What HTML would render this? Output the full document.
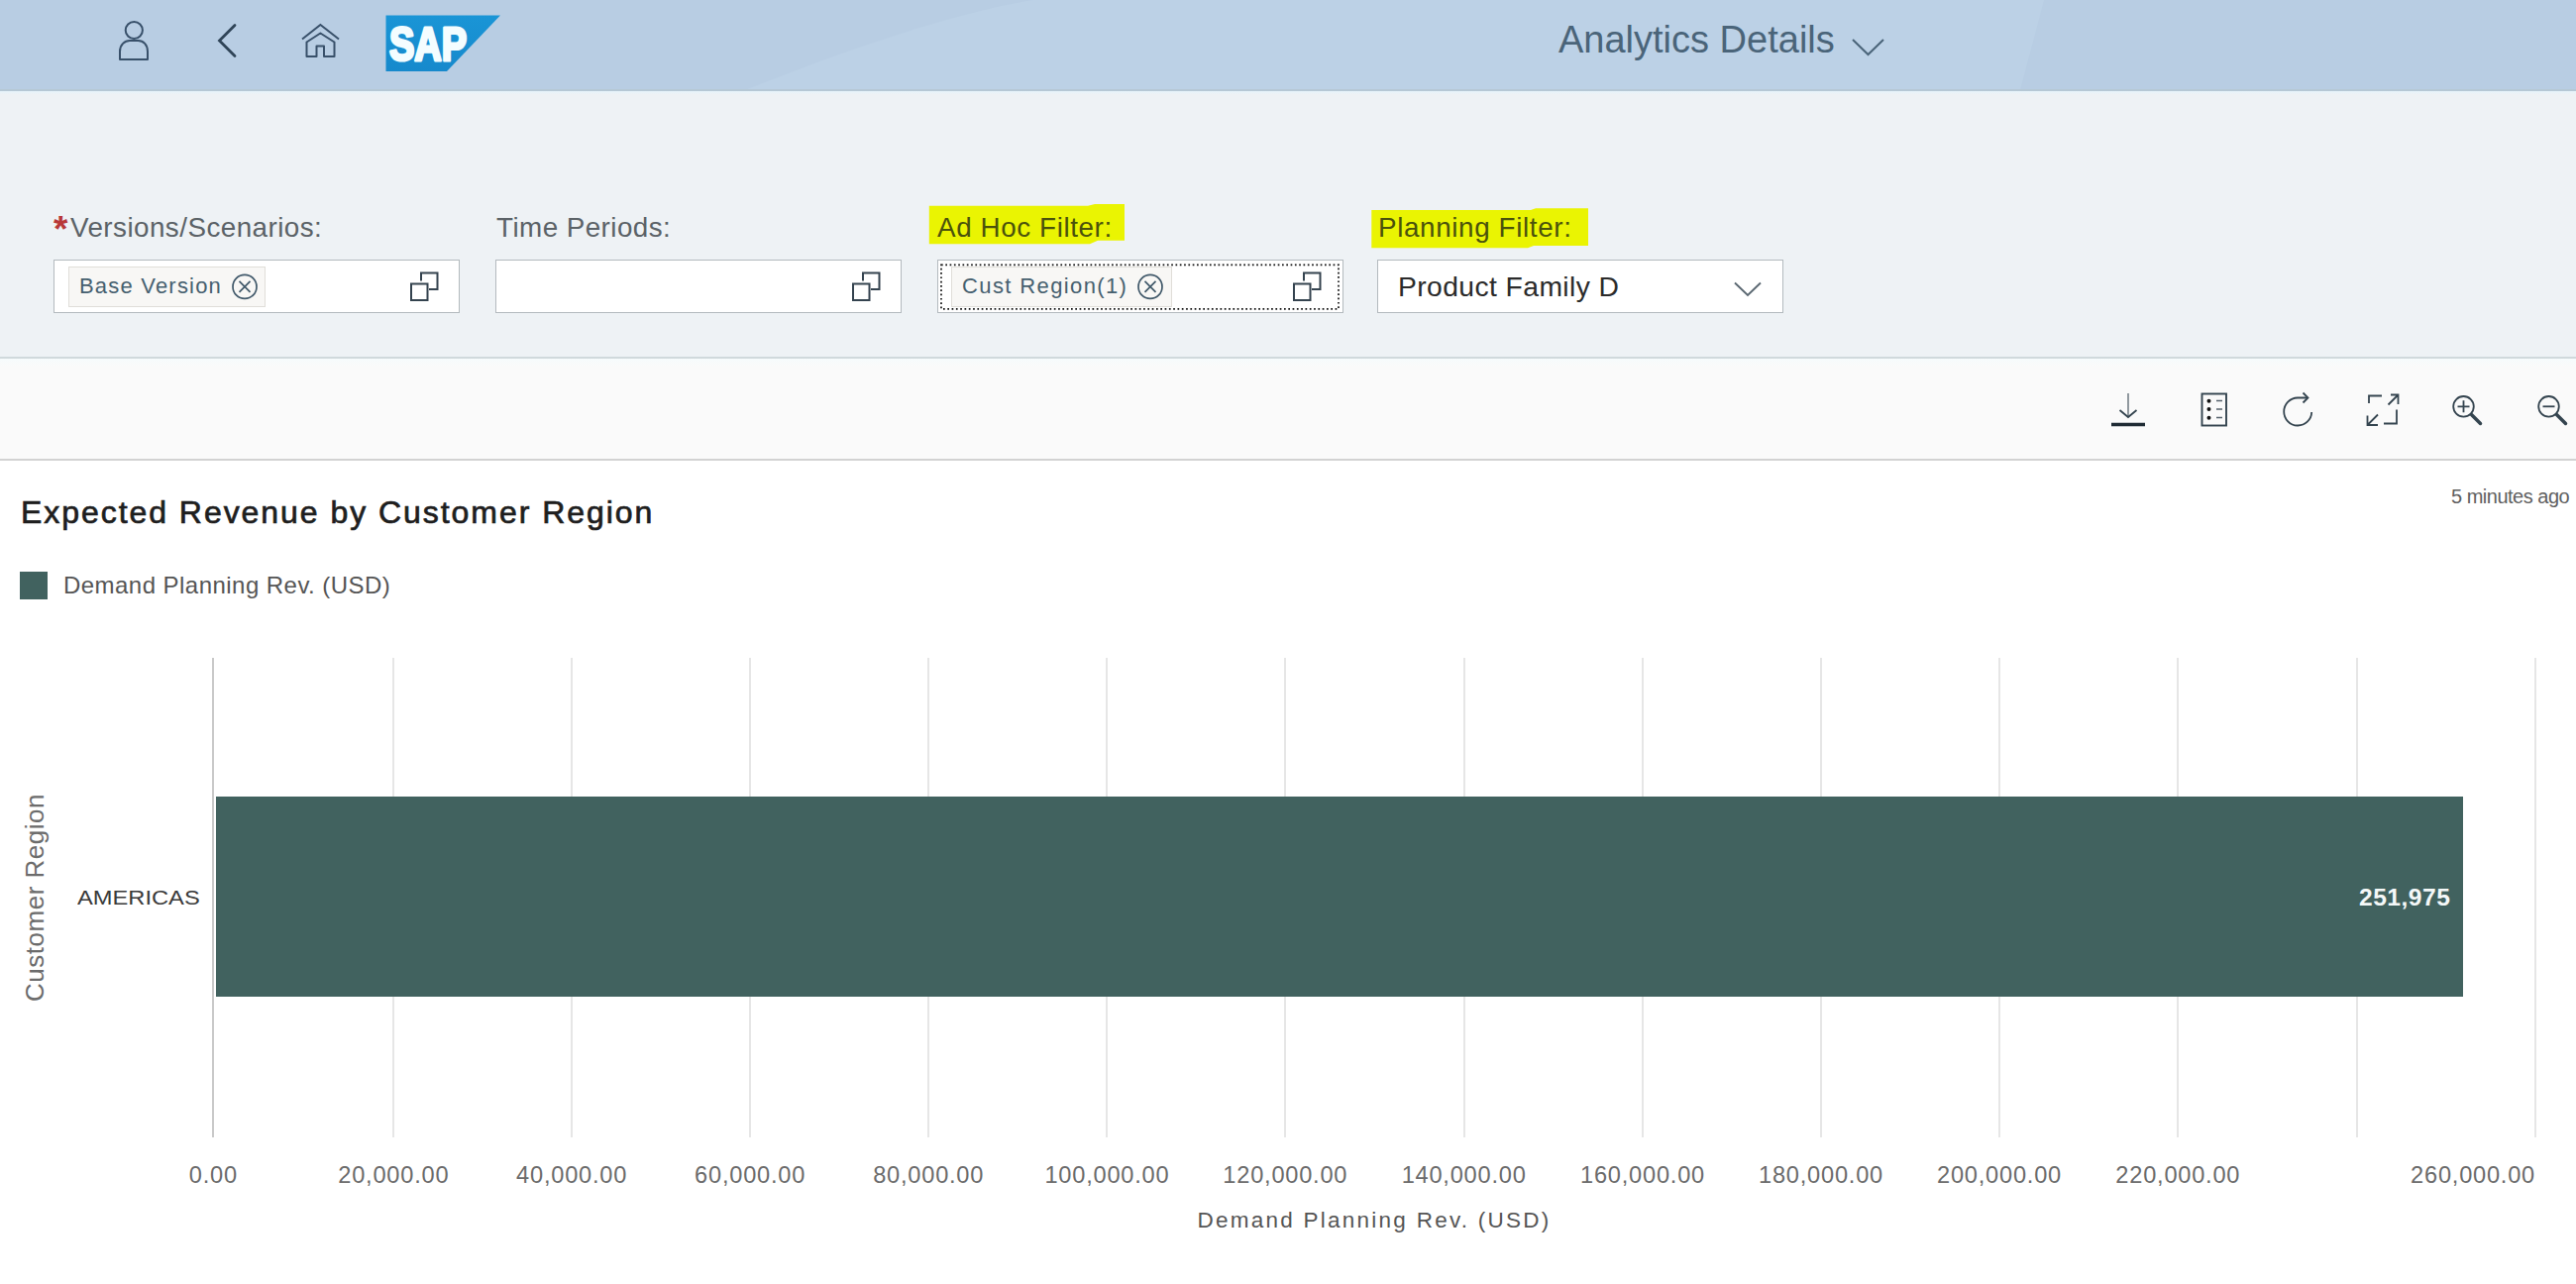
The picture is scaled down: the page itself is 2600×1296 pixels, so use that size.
<!DOCTYPE html>
<html>
<head>
<meta charset="utf-8">
<style>
html,body{margin:0;padding:0;}
body{width:2600px;height:1296px;overflow:hidden;position:relative;background:#fff;font-family:"Liberation Sans",sans-serif;}
.a{position:absolute;white-space:nowrap;}
#hdr{left:0;top:0;width:2600px;height:91px;background:#b8cde3;overflow:hidden;}
#filt{left:0;top:91px;width:2600px;height:269px;background:#eef2f5;}
#sep1{left:0;top:360px;width:2600px;height:2px;background:#d0d9dc;}
#tb{left:0;top:362px;width:2600px;height:101px;background:linear-gradient(#f6fbfc,#fafafa 8px);}
#sep2{left:0;top:463px;width:2600px;height:2px;background:#d2d2d2;}
.lbl{font-size:27.8px;line-height:27.8px;color:#5b6267;letter-spacing:0.45px;top:216px;}
.hl{background:#eaf402;}
.inp{top:262px;height:52px;width:408px;background:#fff;border:1px solid #b3babe;}
.tok{top:268.5px;height:41px;background:#f8f7f5;border:1px solid #e0ded9;box-sizing:border-box;}
.toktxt{font-size:22px;line-height:22px;color:#46606f;letter-spacing:1.2px;top:278px;}
.grid{top:664px;height:483.5px;width:2px;background:#e6e6e6;}
.tick{font-size:23.6px;line-height:23.6px;color:#6b6b6b;letter-spacing:0.78px;top:1174.5px;}
</style>
</head>
<body>
<!-- HEADER -->
<div id="hdr" class="a">
  <svg class="a" style="left:0;top:0" width="2600" height="91">
    <path d="M752 91 C 880 40, 980 10, 1043 0 L 2063 0 L 2039 91 Z" fill="#bcd1e6"/>
  </svg>
  <!-- person -->
  <svg class="a" style="left:110px;top:15px" width="50" height="55" viewBox="110 15 50 55">
    <circle cx="135.3" cy="30.5" r="8.6" fill="none" stroke="#38506a" stroke-width="2"/>
    <path d="M121 60 L121 52 C121 45 126 41 131 41 L139.5 41 C144.5 41 149 45 149 52 L149 60 Z" fill="none" stroke="#38506a" stroke-width="2" stroke-linejoin="round"/>
  </svg>
  <!-- back -->
  <svg class="a" style="left:210px;top:15px" width="40" height="55" viewBox="210 15 40 55">
    <path d="M237 25.5 L221.5 41 L237 56.5" fill="none" stroke="#2f4457" stroke-width="2.8" stroke-linecap="round"/>
  </svg>
  <!-- home -->
  <svg class="a" style="left:300px;top:15px" width="50" height="55" viewBox="300 15 50 55">
    <path d="M305 39.5 L323.4 25 L342 39.5" fill="none" stroke="#38506a" stroke-width="2"/>
    <path d="M309.5 57 L309.5 42.5 L323.4 33.5 L337.5 42.5 L337.5 57 L327 57 L327 46.5 L319.5 46.5 L319.5 57 Z" fill="none" stroke="#38506a" stroke-width="2" stroke-linejoin="round"/>
  </svg>
  <!-- SAP logo -->
  <svg class="a" style="left:385px;top:10px" width="130" height="70" viewBox="385 10 130 70">
    <defs><linearGradient id="sapg" x1="0" y1="0" x2="0" y2="1"><stop offset="0" stop-color="#1a95d6"/><stop offset="1" stop-color="#1689cc"/></linearGradient></defs>
    <path d="M389.5 15.5 L505 15.5 L451 72 L389.5 72 Z" fill="url(#sapg)"/>
    <text x="393" y="61" font-family="Liberation Sans" font-weight="700" font-size="48" fill="#f4fdff" stroke="#f4fdff" stroke-width="3.2" stroke-linejoin="round" textLength="78" lengthAdjust="spacingAndGlyphs">SAP</text>
  </svg>
  <div class="a" style="left:1573px;top:21px;font-size:38px;line-height:38px;color:#4a6479;">Analytics Details</div>
  <svg class="a" style="left:1860px;top:30px" width="50" height="35" viewBox="1860 30 50 35">
    <path d="M1870 40 L1885.5 55 L1901 40" fill="none" stroke="#4a6479" stroke-width="2"/>
  </svg>
</div>

<!-- FILTER BAR -->
<div id="filt" class="a"></div>
<div class="a" style="left:0;top:89.5px;width:2600px;height:2px;background:#b6c8d5"></div>
<div class="a" style="left:0;top:91.5px;width:2600px;height:3px;background:linear-gradient(#e6f4fc,#edf2f5)"></div>
<div class="a" style="left:54px;top:212.5px;font-size:37px;line-height:37px;color:#b83838;font-weight:700">*</div>
<div class="a lbl" style="left:71px">Versions/Scenarios:</div>
<div class="a lbl" style="left:501px">Time Periods:</div>
<svg class="a" style="left:930px;top:200px" width="215" height="55" viewBox="930 200 215 55"><path d="M937.8 207.8 L1098 207.8 L1105 206 L1135 206 L1135 242.8 L1108 242.8 L1100 246.2 L937.8 246.2 Z" fill="#eaf402"/></svg>
<div class="a lbl" style="left:946px;color:#4a520c;letter-spacing:0.6px">Ad Hoc Filter:</div>
<svg class="a" style="left:1378px;top:204px" width="232" height="52" viewBox="1378 204 232 52"><path d="M1384.3 212 L1545 212 L1550 210.3 L1603 210.3 L1603 248 L1548 248 L1542 250.3 L1384.3 250.3 Z" fill="#eaf402"/></svg>
<div class="a lbl" style="left:1391px;color:#4a520c;letter-spacing:0.63px">Planning Filter:</div>

<!-- inputs -->
<div class="a inp" style="left:54px"></div>
<div class="a tok" style="left:69px;width:199px"></div>
<div class="a toktxt" style="left:80px">Base Version</div>
<svg class="a" style="left:230px;top:273px" width="34" height="34" viewBox="230 273 34 34">
  <circle cx="247" cy="289.4" r="12" fill="none" stroke="#41596a" stroke-width="1.7"/>
  <path d="M241.5 283.9 L252.5 294.9 M252.5 283.9 L241.5 294.9" stroke="#41596a" stroke-width="1.7"/>
</svg>
<svg class="a" style="left:410px;top:270px" width="36" height="38" viewBox="410 270 36 38">
  <path d="M425 283.5 L425 275.5 L441.5 275.5 L441.5 292 L433 292" fill="none" stroke="#34434f" stroke-width="2"/>
  <rect x="415" y="286.5" width="16.5" height="16.5" fill="none" stroke="#34434f" stroke-width="2"/>
</svg>

<div class="a inp" style="left:499.5px"></div>
<svg class="a" style="left:855.5px;top:270px" width="36" height="38" viewBox="410 270 36 38">
  <path d="M425 283.5 L425 275.5 L441.5 275.5 L441.5 292 L433 292" fill="none" stroke="#34434f" stroke-width="2"/>
  <rect x="415" y="286.5" width="16.5" height="16.5" fill="none" stroke="#34434f" stroke-width="2"/>
</svg>

<div class="a inp" style="left:945.5px"></div>
<svg class="a" style="left:945px;top:262px" width="410" height="54" viewBox="945 262 410 54"><rect x="950" y="267.3" width="401" height="44.5" fill="none" stroke="#111" stroke-width="1.7" stroke-dasharray="1.7 2.6"/></svg>
<div class="a tok" style="left:960px;width:223px"></div>
<div class="a toktxt" style="left:971px;letter-spacing:1.38px">Cust Region(1)</div>
<svg class="a" style="left:1144px;top:273px" width="34" height="34" viewBox="230 273 34 34">
  <circle cx="247" cy="289.4" r="12" fill="none" stroke="#41596a" stroke-width="1.7"/>
  <path d="M241.5 283.9 L252.5 294.9 M252.5 283.9 L241.5 294.9" stroke="#41596a" stroke-width="1.7"/>
</svg>
<svg class="a" style="left:1301px;top:270px" width="36" height="38" viewBox="410 270 36 38">
  <path d="M425 283.5 L425 275.5 L441.5 275.5 L441.5 292 L433 292" fill="none" stroke="#34434f" stroke-width="2"/>
  <rect x="415" y="286.5" width="16.5" height="16.5" fill="none" stroke="#34434f" stroke-width="2"/>
</svg>

<div class="a inp" style="left:1390px"></div>
<div class="a" style="left:1411px;top:275.3px;font-size:28.3px;line-height:28.3px;color:#2b2b2b;letter-spacing:0.4px">Product Family D</div>
<svg class="a" style="left:1745px;top:280px" width="40" height="24" viewBox="1745 280 40 24">
  <path d="M1751 285.5 L1764 298 L1777 285.5" fill="none" stroke="#5a6771" stroke-width="1.9"/>
</svg>

<!-- separators & toolbar -->
<div id="sep1" class="a"></div>
<div id="tb" class="a"></div>
<div id="sep2" class="a"></div>

<svg class="a" style="left:2120px;top:385px" width="480" height="60" viewBox="2120 385 480 60">
  <g fill="none" stroke="#34444f" stroke-width="1.8">
    <!-- download -->
    <path d="M2148 397 L2148 420" stroke="#7d878e" stroke-width="1.7"/>
    <path d="M2139.5 414 L2148 421 L2156.5 414"/>
    <path d="M2131 428.5 L2165 428.5" stroke-width="3.6" stroke="#1f2b34"/>
    <!-- list -->
    <rect x="2222.5" y="397.5" width="24.5" height="32" stroke-width="1.9"/>
    <path d="M2237 404.5 L2243 404.5 M2237 413 L2243 413 M2237 421.5 L2243 421.5" stroke-width="1.6" stroke="#55626b"/>
    <!-- refresh -->
    <path d="M2329 401.5 L2319 401.5 A14 14 0 1 0 2333.2 416" stroke-width="1.8"/>
    <path d="M2324.5 396.5 L2329.5 401.5 L2324.5 406.5" stroke-width="1.8"/>
    <!-- fullscreen -->
    <path d="M2391 407 L2391 399.5 L2404 399.5"/>
    <path d="M2413 398.5 L2420.5 398.5 L2420.5 408 M2420.5 398.5 L2410.5 408.5"/>
    <path d="M2419 413.5 L2419 427.5 L2406 427.5"/>
    <path d="M2389.5 419.5 L2389.5 429 L2400 429 M2389.5 429 L2400 418.5"/>
    <!-- zoom in -->
    <circle cx="2486.5" cy="410.3" r="10.3"/>
    <path d="M2480.5 410.3 L2492.5 410.3 M2486.5 404.3 L2486.5 416.3"/>
    <path d="M2494.5 418.5 L2503.5 427.5" stroke-width="3.5" stroke-linecap="round"/>
    <!-- zoom out -->
    <circle cx="2572.5" cy="410.3" r="10.3"/>
    <path d="M2566.5 410.3 L2578.5 410.3"/>
    <path d="M2580.5 418.5 L2589.5 427.5" stroke-width="3.5" stroke-linecap="round"/>
  </g>
  <g fill="#111">
    <circle cx="2229.5" cy="404.7" r="2"/><circle cx="2229.5" cy="413" r="2"/><circle cx="2229.5" cy="421.8" r="2"/>
  </g>
</svg>

<!-- CHART -->
<div class="a" style="left:2474px;top:490.5px;font-size:20px;line-height:20px;color:#606060;letter-spacing:-0.5px">5 minutes ago</div>
<div class="a" style="left:21px;top:501px;font-size:32px;line-height:32px;color:#1e1e1e;font-weight:400;letter-spacing:1.95px;-webkit-text-stroke:0.7px #1e1e1e">Expected Revenue by Customer Region</div>
<div class="a" style="left:20px;top:577px;width:28px;height:28px;background:#41625f"></div>
<div class="a" style="left:64px;top:579px;font-size:24px;line-height:24px;color:#555;letter-spacing:0.46px">Demand Planning Rev. (USD)</div>

<div class="a grid" style="left:214.3px;width:2px;background:#c9c9c9"></div>
<div class="a grid" style="left:396.3px;width:2px;background:#e6e6e6"></div>
<div class="a grid" style="left:576.1px;width:2px;background:#e6e6e6"></div>
<div class="a grid" style="left:756.1px;width:2px;background:#e6e6e6"></div>
<div class="a grid" style="left:936.2px;width:2px;background:#e6e6e6"></div>
<div class="a grid" style="left:1116.4px;width:2px;background:#e6e6e6"></div>
<div class="a grid" style="left:1296.3px;width:2px;background:#e6e6e6"></div>
<div class="a grid" style="left:1476.6px;width:2px;background:#e6e6e6"></div>
<div class="a grid" style="left:1657.0px;width:2px;background:#e6e6e6"></div>
<div class="a grid" style="left:1837.0px;width:2px;background:#e6e6e6"></div>
<div class="a grid" style="left:2017.0px;width:2px;background:#e6e6e6"></div>
<div class="a grid" style="left:2197.3px;width:2px;background:#e6e6e6"></div>
<div class="a grid" style="left:2377.5px;width:2px;background:#e6e6e6"></div>
<div class="a grid" style="left:2557.5px;width:2px;background:#e6e6e6"></div>
<div class="a" style="left:215.3px;top:1174.5px;width:0;height:0"><div class="a tick" style="left:0;top:0;transform:translateX(-50%)">0.00</div></div>
<div class="a" style="left:397.3px;top:1174.5px;width:0;height:0"><div class="a tick" style="left:0;top:0;transform:translateX(-50%)">20,000.00</div></div>
<div class="a" style="left:577.1px;top:1174.5px;width:0;height:0"><div class="a tick" style="left:0;top:0;transform:translateX(-50%)">40,000.00</div></div>
<div class="a" style="left:757.1px;top:1174.5px;width:0;height:0"><div class="a tick" style="left:0;top:0;transform:translateX(-50%)">60,000.00</div></div>
<div class="a" style="left:937.2px;top:1174.5px;width:0;height:0"><div class="a tick" style="left:0;top:0;transform:translateX(-50%)">80,000.00</div></div>
<div class="a" style="left:1117.4px;top:1174.5px;width:0;height:0"><div class="a tick" style="left:0;top:0;transform:translateX(-50%)">100,000.00</div></div>
<div class="a" style="left:1297.3px;top:1174.5px;width:0;height:0"><div class="a tick" style="left:0;top:0;transform:translateX(-50%)">120,000.00</div></div>
<div class="a" style="left:1477.6px;top:1174.5px;width:0;height:0"><div class="a tick" style="left:0;top:0;transform:translateX(-50%)">140,000.00</div></div>
<div class="a" style="left:1658.0px;top:1174.5px;width:0;height:0"><div class="a tick" style="left:0;top:0;transform:translateX(-50%)">160,000.00</div></div>
<div class="a" style="left:1838.0px;top:1174.5px;width:0;height:0"><div class="a tick" style="left:0;top:0;transform:translateX(-50%)">180,000.00</div></div>
<div class="a" style="left:2018.0px;top:1174.5px;width:0;height:0"><div class="a tick" style="left:0;top:0;transform:translateX(-50%)">200,000.00</div></div>
<div class="a" style="left:2198.3px;top:1174.5px;width:0;height:0"><div class="a tick" style="left:0;top:0;transform:translateX(-50%)">220,000.00</div></div>
<div class="a tick" style="right:41px">260,000.00</div>

<div class="a" style="left:218px;top:804px;width:2268px;height:202px;background:#41625f"></div>
<div class="a" style="left:2381px;top:894px;font-size:24.6px;line-height:24.6px;color:#f4f8f8;font-weight:700;letter-spacing:0.5px">251,975</div>
<div class="a" style="left:78px;top:896px;font-size:20.7px;line-height:20.7px;color:#3a3a3a;transform:scaleX(1.145);transform-origin:0 0">AMERICAS</div>
<div class="a" style="left:34.5px;top:906px;width:0;height:0">
  <div class="a" style="left:0;top:0;transform:translate(-50%,-50%) rotate(-90deg);font-size:26px;line-height:26px;color:#6c6c6c;letter-spacing:0.5px">Customer Region</div>
</div>
<div class="a" style="left:1387px;top:1221px;width:0;height:0">
  <div class="a" style="left:0;top:0;transform:translateX(-50%);font-size:22.5px;line-height:22.5px;color:#555;letter-spacing:2.25px">Demand Planning Rev. (USD)</div>
</div>

</body>
</html>
